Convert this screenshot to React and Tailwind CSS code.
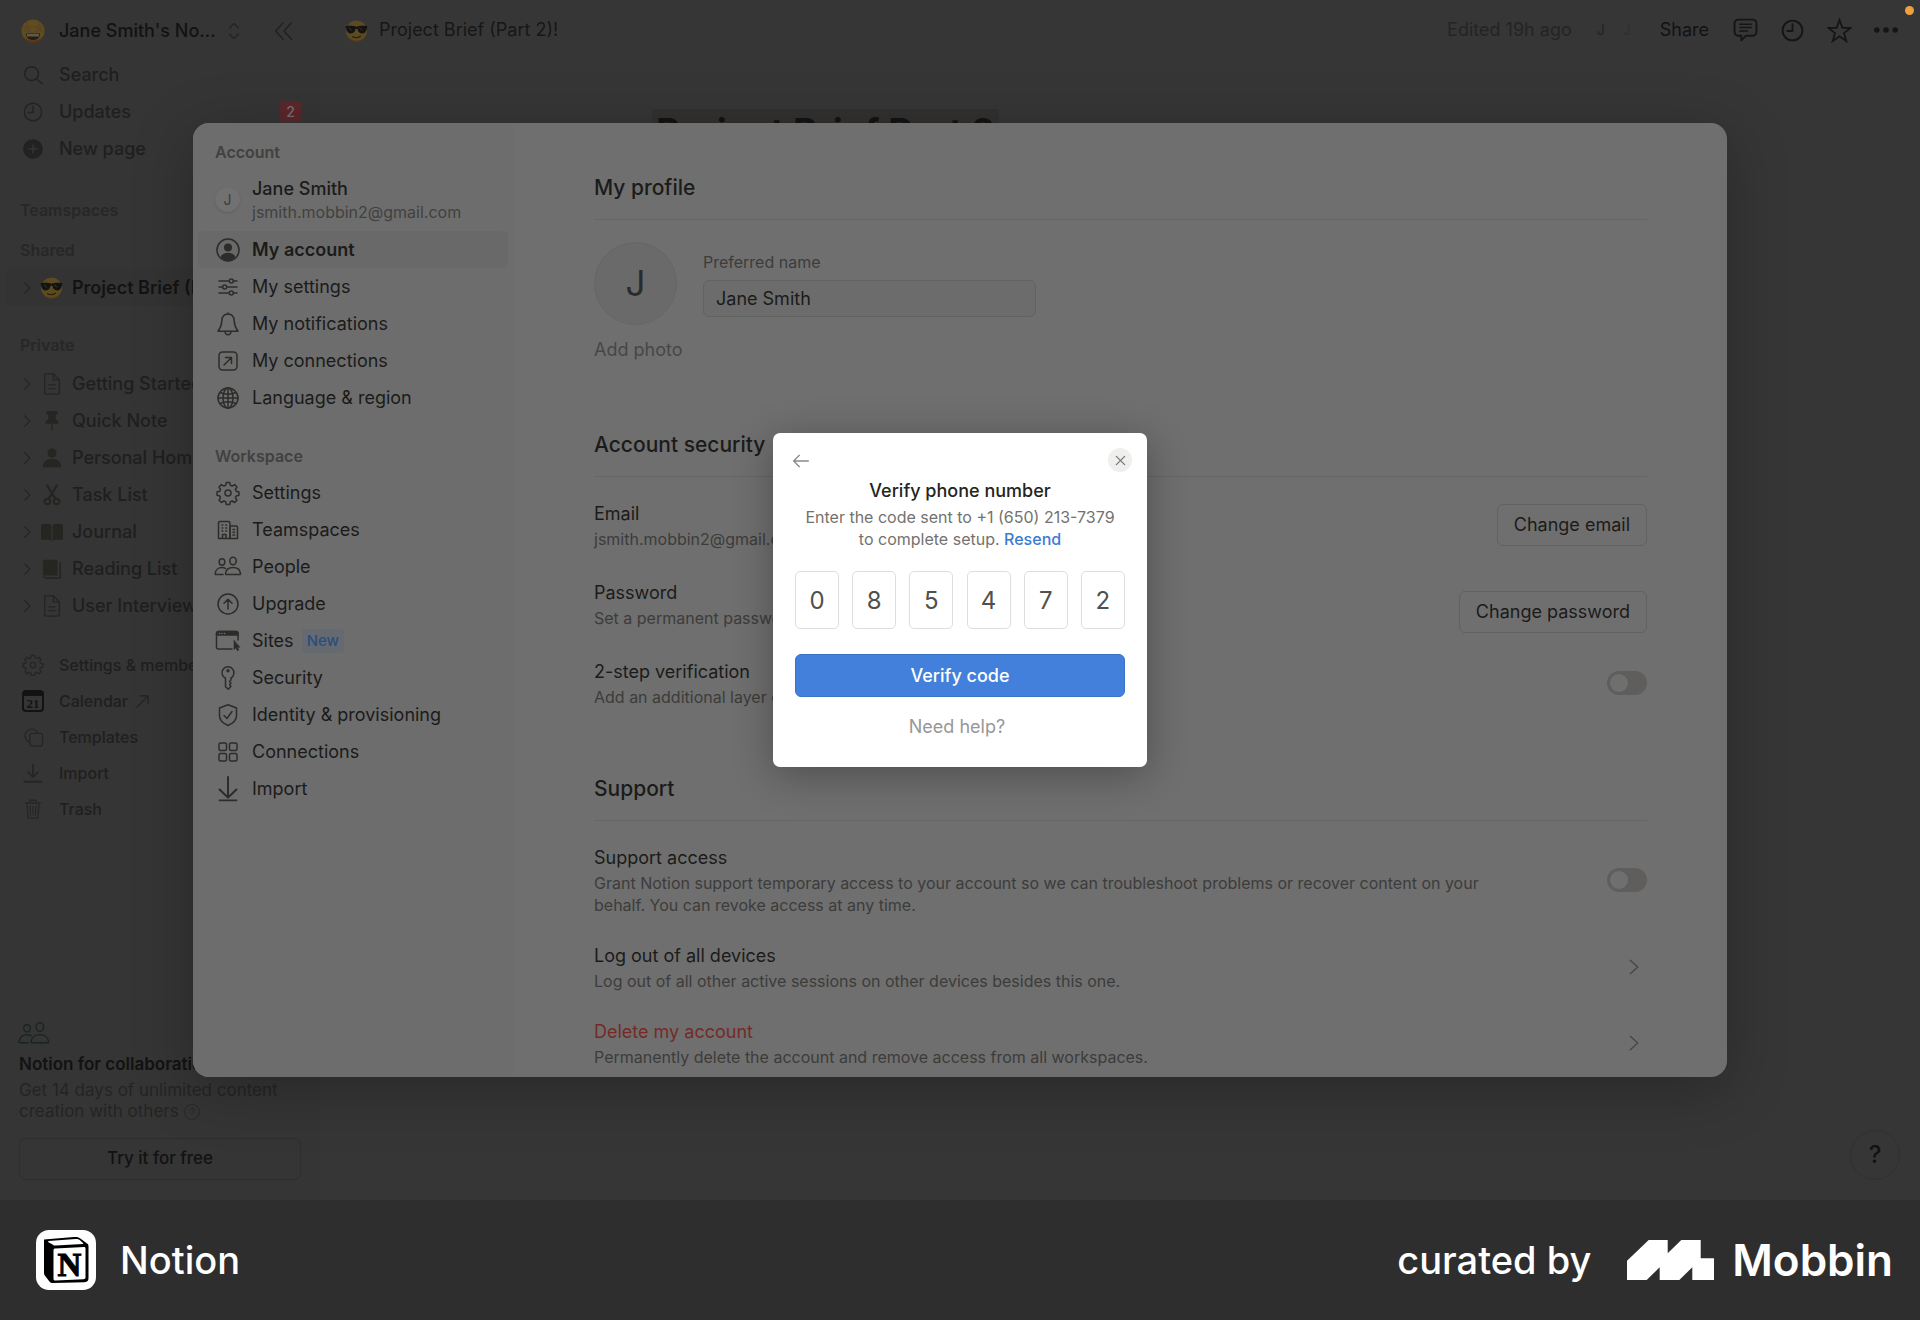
import { useState } from 'react';

const Svg = ({ size = 24, stroke = 1.5, className = '', children }) => (
  <svg
    width={size}
    height={size}
    viewBox="0 0 24 24"
    fill="none"
    stroke="currentColor"
    strokeWidth={stroke}
    strokeLinecap="round"
    strokeLinejoin="round"
    className={`shrink-0 ${className}`}
    aria-hidden="true"
  >
    {children}
  </svg>
);

const icons = {
  search: (
    <>
      <circle cx="10.5" cy="10.5" r="7.5" />
      <path d="m16 16 6 5.5" />
    </>
  ),
  clock: (
    <>
      <circle cx="12" cy="12" r="9.5" />
      <path d="M12 6v6.5H7" />
    </>
  ),
  plus: (
    <>
      <circle cx="12" cy="12" r="10" fill="currentColor" />
      <path d="M12 7.5v9M7.5 12h9" stroke="#353535" />
    </>
  ),
  page: (
    <>
      <path d="M4 1h9.500L20 7.500V21a2 2 0 0 1-2 2H6a2 2 0 0 1-2-2z" />
      <path d="M13.500 1v6.500H20M8.500 13h7M8.500 17h7" />
    </>
  ),
  pin: (
    <g fill="currentColor" stroke="none">
      <path d="M6 1h12v2.500l-2 2v4.500c2 1 3.500 2.500 3.500 5h-15c0-2.500 1.500-4 3.500-5V5.500l-2-2z" />
      <path d="M11.200 15h1.600v6l-.8 2-.8-2z" />
    </g>
  ),
  person: (
    <g fill="currentColor" stroke="none">
      <circle cx="12" cy="6.500" r="5" />
      <path d="M2 22c0-6 4-9 10-9s10 3 10 9z" />
    </g>
  ),
  scissors: (
    <>
      <circle cx="7" cy="19" r="3" strokeWidth="2.200" />
      <circle cx="17" cy="19" r="3" strokeWidth="2.200" />
      <path d="M8.500 16 17 2M15.500 16 7 2" strokeWidth="2.600" />
    </>
  ),
  book: (
    <g fill="currentColor" stroke="none">
      <path d="M0 4c4-1.500 8-1.500 11.300 0v18c-1-1.200-2.300-1.500-3.800-1.500H0z" />
      <path d="M24 4c-4-1.500-8-1.500-11.300 0v18c1-1.200 2.300-1.500 3.800-1.500H24z" />
    </g>
  ),
  books: (
    <>
      <path d="M4 2h13a1 1 0 0 1 1 1v16H4a2 2 0 0 1-2-2V4a2 2 0 0 1 2-2z" fill="currentColor" stroke="none" />
      <path d="M3 20c.5 1.500 1.500 2 3 2h13a2 2 0 0 0 2-2V5" strokeWidth="1.800" />
    </>
  ),
  gear: (
    <>
      <circle cx="12" cy="12" r="3" />
      <path d="M10.300 1.500h3.400l.6 2.800 1.900.8 2.400-1.500 2.300 2.400-1.500 2.400.8 1.900 2.700.6v3.400l-2.700.6-.8 1.900 1.500 2.400-2.300 2.300-2.400-1.500-1.900.8-.6 2.700h-3.400l-.6-2.700-1.900-.8-2.400 1.500L3 19.200l1.500-2.400-.8-1.900-2.700-.6v-3.400l2.700-.6.8-1.900L3 6l2.400-2.400 2.400 1.500 1.900-.8z" />
    </>
  ),
  templates: (
    <>
      <path d="M8.500 17.500A7.200 7.200 0 1 1 16.800 7" />
      <rect x="8.500" y="8" width="14" height="14" rx="3" />
    </>
  ),
  import: (
    <>
      <path d="M12 3v13M6.500 11l5.500 5.500L17.500 11" />
      <path d="M2.500 21.500h19" />
    </>
  ),
  importTall: (
    <>
      <path d="M12 0v20M3.500 12.500l8.500 8 8.500-8" strokeWidth="2" />
      <path d="M3.500 23.300h17" strokeWidth="1.800" />
    </>
  ),
  trash: (
    <>
      <path d="M4 5.500h16M8.500 5.500v-3h7v3M5.500 5.500l1 15.500c.1.800.5 1 1 1h9c.5 0 .9-.2 1-1l1-15.500" />
      <path d="M9 9l.3 9.500M12 9v9.500M15 9l-.3 9.500" strokeWidth="1.200" />
    </>
  ),
  account: (
    <>
      <circle cx="12" cy="12" r="11" strokeWidth="1.600" />
      <circle cx="12" cy="9.500" r="4" fill="currentColor" stroke="none" />
      <path d="M4.500 19c1.500-2.800 4-4.200 7.500-4.200s6 1.400 7.500 4.200A11 11 0 0 1 12 22.500 11 11 0 0 1 4.500 19z" fill="currentColor" stroke="none" />
    </>
  ),
  sliders: (
    <>
      <path d="M3 6h10M17.500 6H21M3 12h3.500M11 12h10M3 18h10M17.500 18H21" />
      <circle cx="15.300" cy="6" r="2" />
      <circle cx="8.700" cy="12" r="2" />
      <circle cx="15.300" cy="18" r="2" />
    </>
  ),
  bell: (
    <>
      <path d="M12 2c-4 0-6 3-6.200 7C5.600 14 4.500 16 2 19.200h20C19.500 16 18.400 14 18.200 9 18 5 16 2 12 2z" />
      <path d="M12 2V1M9 19.500c.2 2 1.400 3.200 3 3.200s2.800-1.200 3-3.200" />
    </>
  ),
  arrowBox: (
    <>
      <rect x="3" y="3" width="18" height="18" rx="3.500" />
      <path d="m8 16 7.500-7.500M9.500 8.500h6v6" />
    </>
  ),
  globe: (
    <>
      <circle cx="12" cy="12" r="10" />
      <ellipse cx="12" cy="12" rx="5" ry="10" />
      <path d="M12 2v20M2 12h20M4 6.500c4.500 2.300 11.500 2.300 16 0M4 17.500c4.500-2.300 11.500-2.300 16 0" />
    </>
  ),
  buildings: (
    <>
      <path d="M2.500 20.500V5a1.500 1.500 0 0 1 1.500-1.500h8.500A1.500 1.500 0 0 1 14 5v15.500z" />
      <path d="M14 8h6a1.500 1.500 0 0 1 1.500 1.500v11H14z" />
      <path d="M6 7h.8M9.800 7h.8M6 10h.8M9.800 10h.8M6 13h.8M9.800 13h.8M17 11.500h1.500M17 14.200h1.500M17 17h1.500M6.500 20v-3.500H10V20" />
    </>
  ),
  people: (
    <>
      <ellipse cx="6" cy="7" rx="2.800" ry="3.200" />
      <ellipse cx="17" cy="6" rx="3.200" ry="3.800" />
      <path d="M9.500 13.500c-1-.7-2.200-1-3.500-1-3.700 0-6.500 2.500-6.800 6-.1.900.3 1 1 1H7M17 12.500c-4 0-7 2.300-7.500 5.800-.1.900.2 1.200 1 1.200h13c.8 0 1.100-.3 1-1.200-.5-3.500-3.500-5.800-7.500-5.800z" />
    </>
  ),
  upgrade: (
    <>
      <circle cx="12" cy="12" r="10" />
      <path d="M12 17V7.500M8 11.200l4-4 4 4" />
    </>
  ),
  sites: (
    <>
      <path d="M16 20H2.500a2 2 0 0 1-2-2V4.500a2 2 0 0 1 2-2h17.500a2 2 0 0 1 2 2V11" />
      <path d="M.5 6V4.500a2 2 0 0 1 2-2h17.500a2 2 0 0 1 2 2V6z" fill="currentColor" />
      <path d="M18 11.500v9l2-1.800 1.300 3 1.500-.7-1.400-2.800h2.300z" fill="currentColor" strokeWidth=".6" />
      <path d="M3.500 4.500h.1M6 4.500h.1M8.500 4.500h.1" stroke="#6f6f6f" />
    </>
  ),
  key: (
    <>
      <path d="M9.500 12.300A6 6 0 1 1 15 12v2l-1.500 1.500L15 17l-1.500 1.700 1.500 1.600-2.700 3-2.800-2.600z" />
      <circle cx="12" cy="4.800" r="1" fill="currentColor" />
    </>
  ),
  shield: (
    <>
      <path d="M12 1.800 20.500 5v8c0 4.500-3.500 7.200-8.500 9.500-5-2.300-8.500-5-8.500-9.500V5z" />
      <path d="m8 12.500 3 3L16 8.500" />
    </>
  ),
  grid: (
    <>
      <rect x="3" y="3" width="7.500" height="7.500" rx="1.500" />
      <rect x="13.500" y="3" width="7.500" height="7.500" rx="1.500" />
      <rect x="3" y="13.500" width="7.500" height="7.500" rx="1.500" />
      <rect x="13.500" y="13.500" width="7.500" height="7.500" rx="1.500" />
    </>
  ),
  comment: (
    <>
      <path d="M5 1.500h14A3.500 3.500 0 0 1 22.500 5v8.500A3.500 3.500 0 0 1 19 17h-6.500L8 21.500V17H5a3.500 3.500 0 0 1-3.500-3.500V5A3.500 3.500 0 0 1 5 1.500z" />
      <path d="M6.500 6h11M6.500 9.200h11M6.500 12.500H14" strokeWidth="1.400" />
    </>
  ),
  star: <path d="m12 1.800 2.700 7.700h8l-6.400 4.900 2.300 7.800L12 17.500l-6.600 4.700 2.300-7.800L1.300 9.500h8z" strokeLinejoin="miter" />,
};

const Icon = ({ name, ...props }) => <Svg {...props}>{icons[name]}</Svg>;

const StarEyesEmoji = () => (
  <svg width="26" height="26" viewBox="0 0 26 26" className="shrink-0" aria-hidden="true">
    <circle cx="13" cy="13" r="11.500" fill="#5f4c1f" />
    <path d="M3 18c4 6 16 6 20 0-2 5-6 7-10 7S5 23 3 18z" fill="#54351b" />
    <path d="m7 4 1.700 4 4.300.2-3.400 2.700 1.200 4.200L7 12.700l-3.800 2.400 1.200-4.200L1 8.200 5.300 8zM19 4l1.700 4 4.300.2-3.400 2.700 1.200 4.200-3.800-2.400-3.800 2.400 1.200-4.200L13 8.200l4.300-.2z" fill="#5b4526" />
    <path d="M6 15.500h14c0 4.500-3 6.500-7 6.500s-7-2-7-6.500z" fill="#2a1c14" />
    <path d="M7 16h12v2.500H7z" fill="#5c5a55" />
  </svg>
);

const SunglassesEmoji = () => (
  <svg width="23" height="23" viewBox="0 0 24 24" className="shrink-0" aria-hidden="true">
    <circle cx="12" cy="12.500" r="11" fill="#5d4b20" />
    <path d="M2 17c4 7.500 16 7.500 20 0-2 5-6 6.500-10 6.500S4 22 2 17z" fill="#53391b" />
    <path d="M.8 7.500C4 7 9 7 12 8c3-1 8-1 11.200-.5v1.800c-1 .5-.8 5.700-5 5.700-3.500 0-4.500-2-5.200-4.500-.3-.7-1.700-.7-2 0C10.300 13 9.300 15 5.800 15c-4.200 0-4-5.200-5-5.700z" fill="#131313" />
    <path d="m4 9 3 3M15 9l3 3" stroke="#3b3b3b" />
    <path d="M8 18.500c2.500 1.300 5.500 1.300 8-.5" fill="none" stroke="#2a1d12" strokeWidth="1.400" strokeLinecap="round" />
  </svg>
);

const CalendarIcon = () => (
  <svg width="22" height="22" viewBox="0 0 22 22" className="shrink-0" aria-hidden="true">
    <rect x="1" y="1" width="20" height="20" rx="3" fill="none" stroke="#131313" strokeWidth="2" />
    <path d="M1 1.500h20V6H1z" fill="#131313" />
    <text x="11" y="17.500" textAnchor="middle" fontSize="13" fontWeight="700" fontFamily="'Liberation Serif', serif" fill="#131313">21</text>
  </svg>
);

const Chevron = () => (
  <Svg size={14} stroke={2} className="text-[#252525]">
    <path d="m8 3 9 9-9 9" />
  </Svg>
);

const privatePages = [
  { icon: 'page', label: 'Getting Started' },
  { icon: 'pin', label: 'Quick Note' },
  { icon: 'person', label: 'Personal Home' },
  { icon: 'scissors', label: 'Task List' },
  { icon: 'book', label: 'Journal' },
  { icon: 'books', label: 'Reading List' },
  { icon: 'page', label: 'User Interviews' },
];

const accountItems = [
  { icon: 'account', label: 'My account' },
  { icon: 'sliders', label: 'My settings' },
  { icon: 'bell', label: 'My notifications' },
  { icon: 'arrowBox', label: 'My connections' },
  { icon: 'globe', label: 'Language & region' },
];

const workspaceItems = [
  { icon: 'gear', label: 'Settings' },
  { icon: 'buildings', label: 'Teamspaces' },
  { icon: 'people', label: 'People' },
  { icon: 'upgrade', label: 'Upgrade' },
  { icon: 'sites', label: 'Sites', badge: 'New' },
  { icon: 'key', label: 'Security' },
  { icon: 'shield', label: 'Identity & provisioning' },
  { icon: 'grid', label: 'Connections' },
  { icon: 'importTall', label: 'Import' },
];

const SideLink = ({ icon, label, children }) => (
  <button className="flex h-[37px] w-full items-center gap-[15px] pl-[22px] pr-[19px] text-left text-lg font-medium text-[#1f1f1f]">
    <Icon name={icon} size={22} className="text-[#222222]" />
    <span>{label}</span>
    {children}
  </button>
);

const ToolLink = ({ icon, label, children }) => (
  <button className="flex h-9 w-full items-center gap-[15px] pl-[22px] text-left text-base font-medium text-[#1f1f1f]">
    {icon}
    <span>{label}</span>
    {children}
  </button>
);

const PageSidebar = () => (
  <aside className="flex w-80 shrink-0 flex-col bg-[#353535] pt-3 pb-5">
    <div className="flex h-[38px] items-center pl-5">
      <StarEyesEmoji />
      <span className="ml-[13px] w-[160px] text-lg font-medium whitespace-nowrap text-[#121212]">Jane Smith's No...</span>
      <Svg size={18} className="ml-[6px] text-[#222222]">
        <path d="m6 8 6-6 6 6M6 16l6 6 6-6" />
      </Svg>
      <button aria-label="Close sidebar" className="ml-[31px] text-[#1f1f1f]">
        <Svg size={20} stroke={1.6}>
          <path d="M11 2 2 12l9 10M21 2l-9 10 9 10" />
        </Svg>
      </button>
    </div>
    <nav className="mt-[6px]">
      <SideLink icon="search" label="Search" />
      <SideLink icon="clock" label="Updates">
        <span className="ml-auto flex h-[21px] w-[21px] items-center justify-center rounded bg-[#5c272b] text-sm text-[#787070]">2</span>
      </SideLink>
      <SideLink icon="plus" label="New page" />
    </nav>
    <h2 className="mt-[27px] h-8 pl-5 text-base leading-8 font-semibold text-[#272727]">Teamspaces</h2>
    <h2 className="mt-2 h-8 pl-5 text-base leading-8 font-semibold text-[#272727]">Shared</h2>
    <button className="mx-[5px] mt-[3px] flex h-[37px] items-center rounded-md bg-[#333333] pl-[15px] text-lg font-semibold whitespace-nowrap text-[#131313]">
      <Chevron />
      <span className="mr-[9px] ml-[6px]"><SunglassesEmoji /></span>
      Project Brief (Part 2)!
    </button>
    <h2 className="mt-[23px] h-8 pl-5 text-base leading-8 font-semibold text-[#272727]">Private</h2>
    <nav className="mt-1">
      {privatePages.map((page) => (
        <button key={page.label} className="flex h-[37px] w-full items-center pl-5 text-lg font-medium text-[#1f1f1f]">
          <Chevron />
          <Icon name={page.icon} size={22} className="mr-[9px] ml-[7px] text-[#252522]" />
          {page.label}
        </button>
      ))}
    </nav>
    <nav className="mt-[23px]">
      <ToolLink icon={<Icon name="gear" size={22} className="text-[#262626]" />} label="Settings & members" />
      <ToolLink icon={<CalendarIcon />} label="Calendar">
        <Svg size={15} stroke={1.8} className="-ml-2 text-[#222222]">
          <path d="M3 21 21 3M8 3h13v13" />
        </Svg>
      </ToolLink>
      <ToolLink icon={<Icon name="templates" size={22} className="text-[#262626]" />} label="Templates" />
      <ToolLink icon={<Icon name="import" size={22} stroke={2} className="text-[#262626]" />} label="Import" />
      <ToolLink icon={<Icon name="trash" size={22} className="text-[#262626]" />} label="Trash" />
    </nav>
    <div className="mt-auto flex flex-col px-[19px]">
      <Svg size={28} stroke={1.2} className="ml-px overflow-visible text-[#17251f]">
        {icons.people}
      </Svg>
      <h3 className="mt-1 text-[17px] leading-6 font-semibold whitespace-nowrap text-[#121212]">Notion for collaboration</h3>
      <p className="mt-1 text-[17px] leading-[21px] text-[#242424]">
        Get 14 days of unlimited content creation with others{' '}
        <Svg size={18} className="inline text-[#2b2b2b]">
          <circle cx="12" cy="12" r="10" />
          <path d="M9.500 9.500c0-3.500 5-3.500 5 0 0 2-2.500 2-2.500 4M12 17v.1" />
        </Svg>
      </p>
      <button className="mt-4 h-[42px] rounded-md border border-[#2e2e2e] text-[17px] font-medium text-[#121212]">Try it for free</button>
    </div>
  </aside>
);

const PageTopbar = () => (
  <header className="flex h-[60px] items-center pl-[25px] pr-[22px] text-lg">
    <SunglassesEmoji />
    <span className="ml-[11px] text-[#161616]">Project Brief (Part 2)!</span>
    <div className="ml-auto flex items-center">
      <span className="text-[#242424]">Edited 19h ago</span>
      <span className="ml-4 flex h-[26px] w-[26px] items-center justify-center rounded-full text-sm text-[#222222]">J</span>
      <span className="flex h-[26px] w-[26px] items-center justify-center rounded-full text-sm text-[#2f2f2f]">J</span>
      <button className="ml-5 text-[#121212]">Share</button>
      <div className="ml-6 flex items-center gap-[22px] text-[#151515]">
        <button aria-label="Comments"><Icon name="comment" size={25} stroke={1.8} /></button>
        <button aria-label="History"><Icon name="clock" size={25} stroke={1.8} /></button>
        <button aria-label="Favorite"><Icon name="star" size={25} stroke={1.700} /></button>
        <button aria-label="More">
          <Svg size={24} className="fill-current stroke-none">
            <circle cx="2.800" cy="12" r="2.800" />
            <circle cx="12" cy="12" r="2.800" />
            <circle cx="21.200" cy="12" r="2.800" />
          </Svg>
        </button>
      </div>
    </div>
  </header>
);

const NavItem = ({ item, selected, onSelect }) => (
  <button
    onClick={onSelect}
    className={
      selected
        ? 'flex h-[37px] items-center gap-3 rounded-md bg-[#696969] px-[18px] text-left text-lg font-semibold text-[#1b1b1a]'
        : 'flex h-[37px] items-center gap-3 rounded-md px-[18px] text-left text-lg text-[#1b1b1a]'
    }
  >
    <Icon name={item.icon} className="overflow-visible text-[#2c2c2a]" />
    {item.label}
    {item.badge && (
      <span className="-ml-1 rounded bg-[#656a70] px-[5px] text-[15px] leading-6 font-medium text-[#284d80]">{item.badge}</span>
    )}
  </button>
);

const SettingsNav = () => {
  const [active, setActive] = useState('My account');

  return (
    <nav className="flex w-80 shrink-0 flex-col bg-[#6d6d6d] px-[5px] pt-[13px]">
      <h2 className="pl-[17px] text-base leading-8 font-semibold text-[#41413f]">Account</h2>
      <div className="flex h-[63px] items-center gap-3 pl-[17px]">
        <span className="flex h-[25px] w-[25px] items-center justify-center rounded-full bg-[#717171] text-sm text-[#3c3c3b] shadow">J</span>
        <div>
          <div className="text-lg leading-6 font-medium text-[#1b1b1a]">Jane Smith</div>
          <div className="text-base leading-[22px] text-[#41413f]">jsmith.mobbin2@gmail.com</div>
        </div>
      </div>
      {accountItems.map((item) => (
        <NavItem key={item.label} item={item} selected={active === item.label} onSelect={() => setActive(item.label)} />
      ))}
      <h2 className="mt-6 mb-[2px] pl-[17px] text-base leading-8 font-semibold text-[#41413f]">Workspace</h2>
      {workspaceItems.map((item) => (
        <NavItem key={item.label} item={item} selected={active === item.label} onSelect={() => setActive(item.label)} />
      ))}
    </nav>
  );
};

const SectionTitle = ({ children }) => (
  <h2 className="border-b border-[#666666] pb-4 text-[21px] leading-[30px] font-medium text-[#1b1b1a]">{children}</h2>
);

const SettingRow = ({ title, text, danger, children }) => (
  <div className="flex items-center justify-between">
    <div className="max-w-[900px]">
      <h3 className={danger ? 'text-lg leading-7 text-[#742b28]' : 'text-lg leading-7 text-[#1b1b1a]'}>{title}</h3>
      <p className="text-base leading-[22px] text-[#3c3c3b]">{text}</p>
    </div>
    {children}
  </div>
);

const Toggle = ({ label }) => (
  <div className="relative flex">
    <input type="checkbox" role="switch" aria-label={label} className="peer h-6 w-10 appearance-none rounded-full bg-[#5f5e5c] checked:bg-[#234675]" />
    <span className="pointer-events-none absolute top-[3px] left-[3px] h-[18px] w-[18px] rounded-full bg-[#6f6f6f] peer-checked:left-[19px]" />
  </div>
);

const RowChevron = ({ label }) => (
  <button aria-label={label} className="mr-1 text-[#464645]">
    <Svg size={18} stroke={1.8}>
      <path d="m7 3 10 9-10 9" />
    </Svg>
  </button>
);

const SettingsContent = () => (
  <section className="min-w-0 flex-1 overflow-hidden pr-20 pl-[81px] pt-[50px]">
    <SectionTitle>My profile</SectionTitle>
    <div className="mt-[22px] flex gap-[26px]">
      <div className="flex h-[83px] w-[83px] items-center justify-center rounded-full border border-[#666666] bg-[#6a6a6a] text-[35px] text-[#2b2b2a]">J</div>
      <div className="flex flex-col pt-[9px]">
        <label htmlFor="name" className="text-base leading-[22px] text-[#3c3c3b]">Preferred name</label>
        <input
          id="name"
          defaultValue="Jane Smith"
          className="mt-[7px] h-[37px] w-[333px] rounded-md border border-[#626262] bg-[#6c6c6c] px-3 text-lg text-[#1b1b1a]"
        />
      </div>
    </div>
    <button className="mt-[11px] block text-lg leading-7 text-[#474746]">Add photo</button>

    <div className="mt-[66px]">
      <SectionTitle>Account security</SectionTitle>
    </div>
    <div className="mt-[23px] flex flex-col gap-[29px]">
      <SettingRow title="Email" text="jsmith.mobbin2@gmail.com">
        <button className="h-[42px] rounded-md border border-[#616161] px-4 text-lg text-[#1b1b1a]">Change email</button>
      </SettingRow>
      <SettingRow title="Password" text="Set a permanent password to login to your account.">
        <button className="mt-3 -mb-1 h-[42px] rounded-md border border-[#616161] px-4 text-lg text-[#1b1b1a]">Change password</button>
      </SettingRow>
      <SettingRow title="2-step verification" text="Add an additional layer of security to your account during login.">
        <Toggle label="2-step verification" />
      </SettingRow>
    </div>

    <div className="mt-[66px]">
      <SectionTitle>Support</SectionTitle>
    </div>
    <div className="mt-[23px] flex flex-col gap-[26px]">
      <SettingRow
        title="Support access"
        text="Grant Notion support temporary access to your account so we can troubleshoot problems or recover content on your behalf. You can revoke access at any time."
      >
        <Toggle label="Support access" />
      </SettingRow>
      <SettingRow title="Log out of all devices" text="Log out of all other active sessions on other devices besides this one.">
        <RowChevron label="Log out of all devices" />
      </SettingRow>
      <SettingRow title="Delete my account" text="Permanently delete the account and remove access from all workspaces." danger>
        <RowChevron label="Delete my account" />
      </SettingRow>
    </div>
  </section>
);

const VerifyDialog = () => {
  const [code, setCode] = useState(['0', '8', '5', '4', '7', '2']);

  const updateDigit = (index, value) => {
    setCode((prev) => prev.map((digit, i) => (i === index ? value.slice(-1) : digit)));
  };

  return (
    <div role="dialog" aria-labelledby="verify-title" className="w-[374px] rounded-[7px] bg-white px-[22px] pt-[15px] pb-[26px] text-center shadow-[0_8px_40px_rgba(0,0,0,0.3)]">
      <div className="-mr-[7px] -ml-[2px] flex items-center justify-between">
        <button aria-label="Back" className="pt-[2px] text-[#8a8a88]">
          <Svg size={16} stroke={2}>
            <path d="M23 12H1M9.500 3.500 1 12l8.500 8.500" />
          </Svg>
        </button>
        <button aria-label="Close" className="flex h-6 w-6 items-center justify-center rounded-full bg-[#efefee] text-[#7a7a78]">
          <Svg size={11} stroke={3}>
            <path d="m3 3 18 18M21 3 3 21" />
          </Svg>
        </button>
      </div>
      <h2 id="verify-title" className="mt-[7px] text-lg leading-6 font-medium text-[#242422]">Verify phone number</h2>
      <p className="mt-[3px] text-base leading-[22px] text-[#73726e]">
        Enter the code sent to +1 (650) 213-7379
        <br />
        to complete setup.{' '}
        <a href="#resend" className="font-medium text-[#3a7bd5]">Resend</a>
      </p>
      <div className="mt-[21px] flex justify-between">
        {code.map((digit, i) => (
          <input
            key={i}
            aria-label={`Digit ${i + 1}`}
            inputMode="numeric"
            value={digit}
            onChange={(e) => updateDigit(i, e.target.value)}
            className="h-[58px] w-11 rounded-[5px] border border-[#dededd] text-center text-2xl text-[#50504e]"
          />
        ))}
      </div>
      <button className="mt-[25px] h-[43px] w-full rounded-md border border-[#3a74c8] bg-[#4280dc] text-lg font-medium text-white">Verify code</button>
      <button className="mt-4 mr-[6px] text-lg leading-7 text-[#979795]">Need help?</button>
    </div>
  );
};

const NotionLogo = () => (
  <svg width="60" height="60" viewBox="0 0 60 60" aria-hidden="true">
    <rect width="60" height="60" rx="13" fill="#fff" />
    <path d="M8 9.500 38 7c3-.2 4 0 6 1.300l7 5.200c1 .8 1.500 1.200 1.500 3V48c0 2.500-1 4-4 4.200L17 53c-1.800 0-2.700-.3-4-2L8.500 45C8 44 8 43 8 41.500z" fill="#000" />
    <path d="M12.500 11 39.500 9c2-.1 2.500 0 4 .8l3.500 3.200c.5.500.2 1-.4 1L20 15.500c-1.500.1-2 0-3-.8L12 12z" fill="#fff" />
    <path d="M19.500 18.500 48 17c1 0 1.500.5 1.500 1.500V47c0 1.500-.4 2-2 2.200L19.500 50.500c-1.500 0-2-.6-2-2v-28c0-1.500.5-2 2-2z" fill="#fff" />
    <text x="33.500" y="45.500" textAnchor="middle" fontSize="33" fontWeight="700" fontFamily="'Liberation Serif', serif" fill="#000" stroke="#000">N</text>
  </svg>
);

const MobbinMark = () => (
  <svg width="87" height="40" viewBox="0 0 87 40" fill="#fff" aria-hidden="true">
    <path d="M0 20.700 21.700 0h19v13.300L54.300 0h19.400v18.300H87V40H65.300V27.300L52.300 40H32.700V27.300L19.700 40H0z" />
  </svg>
);

const Footer = () => (
  <footer className="flex h-[120px] shrink-0 items-center justify-between bg-[#2e2e2e] pr-[27px] pl-9 text-white">
    <div className="flex items-center gap-6">
      <NotionLogo />
      <span className="text-[38px] leading-[60px] font-medium">Notion</span>
    </div>
    <div className="flex items-center">
      <span className="text-[38px] leading-[60px] font-medium">curated by</span>
      <span className="mr-[18px] ml-9"><MobbinMark /></span>
      <span className="text-[44px] leading-[60px] font-semibold">Mobbin</span>
    </div>
  </footer>
);

export default function App() {
  return (
    <div className="flex h-screen flex-col bg-[#363636] font-['Inter',sans-serif]">
      <main className="relative flex min-h-0 flex-1 overflow-hidden">
        <PageSidebar />
        <div className="min-w-0 flex-1">
          <PageTopbar />
          <h1 className="mt-[49px] ml-[332px] w-fit bg-[#33312f] px-1 text-[37px] leading-[46px] font-bold text-[#131313]">Project Brief Part 2</h1>
        </div>
        <span className="absolute top-[6px] right-[6px] h-[9px] w-[9px] rounded-full bg-[#eea03f]" />
        <button aria-label="Help" className="absolute right-5 bottom-5 h-[50px] w-[50px] rounded-full border border-[#303030] text-2xl font-medium text-[#121212]">?</button>

        <div className="absolute inset-0 flex items-center justify-center">
          <div className="flex h-full max-h-[954px] w-full max-w-[1534px] overflow-hidden rounded-2xl bg-[#6f6f6f] shadow-[0_12px_60px_rgba(0,0,0,0.25)]">
            <SettingsNav />
            <SettingsContent />
          </div>
        </div>
        <div className="absolute inset-0 flex items-center justify-center">
          <VerifyDialog />
        </div>
      </main>
      <Footer />
    </div>
  );
}
